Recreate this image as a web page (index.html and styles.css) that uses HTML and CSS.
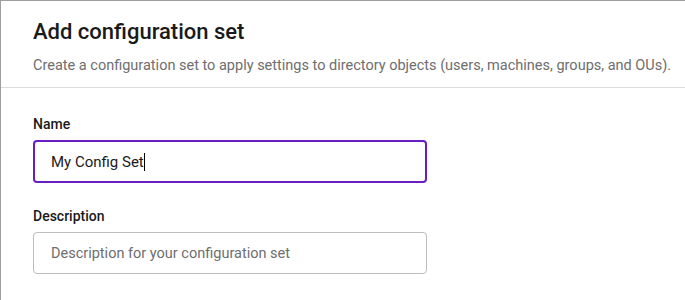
FILE: index.html
```html
<!DOCTYPE html>
<html lang="en">
<head>
  <title>Add configuration set</title>
  <meta charset="utf-8">
  <meta name="viewport" content="width=device-width, initial-scale=1">
  <link rel="stylesheet" href="styles.css">
</head>
<body>
  <div class="panel">
    <header class="panel-header">
      <h1 class="panel-title">Add configuration set</h1>
      <p class="panel-subtitle">Create a configuration set to apply settings to directory objects (users, machines, groups, and OUs).</p>
    </header>
    <form class="panel-body">
      <label class="field">
        <span class="field-title">Name</span>
        <span class="input input-focused"><span class="input-value">My Config Set</span><span class="caret"></span></span>
      </label>
      <label class="field">
        <span class="field-title">Description</span>
        <input class="input" type="text" placeholder="Description for your configuration set">
      </label>
    </form>
  </div>
</body>
</html>
```

FILE: styles.css
```css
*, *::before, *::after {
  margin: 0;
  box-sizing: border-box;
}

body {
  background-color: #FFFFFF;
  color: #1A1A1A;
  font-family: "Roboto", sans-serif;
  font-size: 14px;
}

.panel {
  min-height: 100vh;
  border-top: 1px solid #9E9E9E;
  border-left: 1px solid #9E9E9E;
}

.panel-header {
  padding: 17px 8px 12px 32px;
  border-bottom: 1px solid #DCDCDC;
}

.panel-title {
  font-size: 22px;
  font-weight: 500;
  line-height: 28px;
}

.panel-subtitle {
  margin-top: 11px;
  color: #6E6E6E;
  font-size: 14.5px;
  line-height: 18px;
  white-space: nowrap;
}

.panel-body {
  width: 426px;
  padding: 27px 0 0 32px;
}

.field {
  display: flex;
  flex-direction: column;
}

.field + .field {
  margin-top: 24px;
}

.field-title {
  margin-bottom: 7px;
  font-size: 14px;
  font-weight: 500;
  line-height: 18px;
}

.input {
  display: flex;
  align-items: center;
  height: 42px;
  padding: 0 17px;
  border: 1px solid #BDBDBD;
  border-radius: 4px;
  background-color: #FFFFFF;
  color: #1A1A1A;
  font-family: inherit;
  font-size: 15px;
}

.input::placeholder {
  color: #6E6E6E;
  font-size: 14.5px;
}

.input-focused {
  height: 43px;
  padding: 0 16px;
  border: 2px solid #6A1FC2;
}

.caret {
  width: 1px;
  height: 18px;
  background-color: #000000;
}
```
